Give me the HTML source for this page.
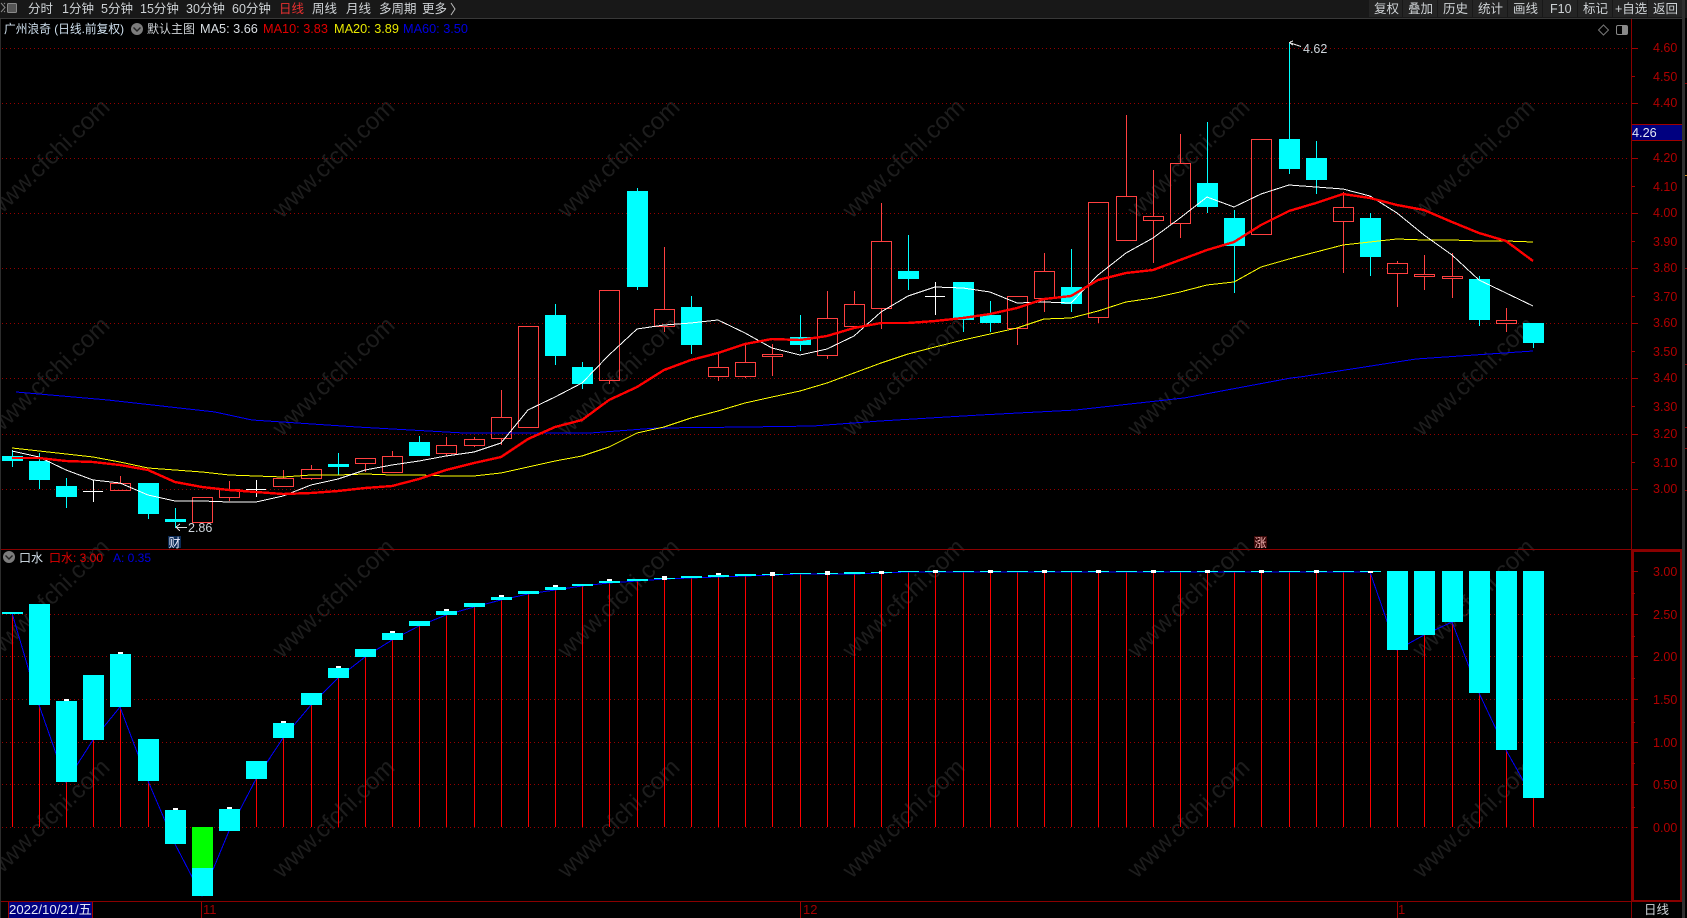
<!DOCTYPE html>
<html>
<head>
<meta charset="utf-8">
<title>广州浪奇</title>
<style>
html,body{margin:0;padding:0;background:#000;width:1687px;height:918px;overflow:hidden}
svg{display:block}
text{font-family:"Liberation Sans","Noto Sans CJK SC",sans-serif}
.t{fill:#cfd3d6;font-size:12.5px}
.a{fill:#b00000;font-size:12.5px}
.w{fill:#1d1d1d;font-size:24px;text-anchor:middle}
</style>
</head>
<body>
<svg width="1687" height="918" viewBox="0 0 1687 918" xmlns="http://www.w3.org/2000/svg">
<rect width="1687" height="918" fill="#000"/>

<!-- watermark -->
<g>
<text class="w" transform="translate(54,164) rotate(-44)">www.cfchi.com</text>
<text class="w" transform="translate(339,164) rotate(-44)">www.cfchi.com</text>
<text class="w" transform="translate(624,164) rotate(-44)">www.cfchi.com</text>
<text class="w" transform="translate(909,164) rotate(-44)">www.cfchi.com</text>
<text class="w" transform="translate(1194,164) rotate(-44)">www.cfchi.com</text>
<text class="w" transform="translate(1479,164) rotate(-44)">www.cfchi.com</text>
<text class="w" transform="translate(54,382) rotate(-44)">www.cfchi.com</text>
<text class="w" transform="translate(339,382) rotate(-44)">www.cfchi.com</text>
<text class="w" transform="translate(624,382) rotate(-44)">www.cfchi.com</text>
<text class="w" transform="translate(909,382) rotate(-44)">www.cfchi.com</text>
<text class="w" transform="translate(1194,382) rotate(-44)">www.cfchi.com</text>
<text class="w" transform="translate(1479,382) rotate(-44)">www.cfchi.com</text>
<text class="w" transform="translate(54,604) rotate(-44)">www.cfchi.com</text>
<text class="w" transform="translate(339,604) rotate(-44)">www.cfchi.com</text>
<text class="w" transform="translate(624,604) rotate(-44)">www.cfchi.com</text>
<text class="w" transform="translate(909,604) rotate(-44)">www.cfchi.com</text>
<text class="w" transform="translate(1194,604) rotate(-44)">www.cfchi.com</text>
<text class="w" transform="translate(1479,604) rotate(-44)">www.cfchi.com</text>
<text class="w" transform="translate(54,824) rotate(-44)">www.cfchi.com</text>
<text class="w" transform="translate(339,824) rotate(-44)">www.cfchi.com</text>
<text class="w" transform="translate(624,824) rotate(-44)">www.cfchi.com</text>
<text class="w" transform="translate(909,824) rotate(-44)">www.cfchi.com</text>
<text class="w" transform="translate(1194,824) rotate(-44)">www.cfchi.com</text>
<text class="w" transform="translate(1479,824) rotate(-44)">www.cfchi.com</text>
</g>

<!-- grid -->
<g stroke="#960000" stroke-width="1" stroke-dasharray="1 3" shape-rendering="crispEdges" fill="none">
<path d="M2 48.5H1630M2 103.5H1630M2 158.5H1630M2 213.5H1630M2 268.5H1630M2 323.5H1630M2 378.5H1630M2 434.5H1630M2 489.5H1630"/>
<path d="M2 614.5H1630M2 656.5H1630M2 699.5H1630M2 742.5H1630M2 784.5H1630M2 827.5H1630"/>
</g>

<!-- upper candles -->
<g shape-rendering="crispEdges">
<path fill="none" stroke="#00ffff" d="M12.5 450V467M39.5 453V489M66.5 478V508M148.5 483V519M175.5 508V528M338.5 453V475M419.5 436V456M555.5 304V365M582.5 362V389M637.5 188V290M691.5 296V354M800.5 315V351M908.5 235V290M963.5 282V332M990.5 301V332M1071.5 249V312M1207.5 122V213M1234.5 210V293M1289.5 42V174M1316.5 141V194M1370.5 213V276M1479.5 276V326M1533.5 323V348"/>
<path fill="#00ffff" d="M2 456h21v5h-21zM29 461h21v19h-21zM56 486h21v11h-21zM138 483h21v31h-21zM165 519h21v3h-21zM328 464h21v3h-21zM409 442h21v14h-21zM545 315h21v41h-21zM572 367h21v17h-21zM627 191h21v96h-21zM681 307h21v38h-21zM790 337h21v8h-21zM898 271h21v8h-21zM953 282h21v38h-21zM980 315h21v8h-21zM1061 287h21v17h-21zM1197 183h21v24h-21zM1224 218h21v28h-21zM1279 139h21v30h-21zM1306 158h21v22h-21zM1360 218h21v39h-21zM1469 279h21v41h-21zM1523 323h21v20h-21z"/>
<path fill="none" stroke="#ff4040" d="M110.5 483.5h20v7h-20zM120.5 476V483M192.5 497.5h20v25h-20zM219.5 489.5h20v8h-20zM229.5 481V489M229.5 498V501M273.5 478.5h20v8h-20zM283.5 470V478M301.5 469.5h20v9h-20zM311.5 465V469M311.5 479V480M355.5 458.5h20v5h-20zM365.5 464V472M382.5 456.5h20v16h-20zM392.5 451V456M436.5 445.5h20v8h-20zM446.5 437V445M446.5 454V456M464.5 439.5h20v6h-20zM474.5 437V439M474.5 446V447M491.5 417.5h20v21h-20zM501.5 390V417M501.5 439V445M518.5 326.5h20v101h-20zM599.5 290.5h20v90h-20zM609.5 381V384M654.5 309.5h20v17h-20zM664.5 247V309M664.5 327V332M708.5 367.5h20v9h-20zM718.5 353V367M718.5 377V381M735.5 362.5h20v14h-20zM745.5 345V362M745.5 377V378M762.5 354.5h20v2h-20zM772.5 344V354M772.5 357V376M817.5 318.5h20v37h-20zM827.5 291V318M827.5 356V359M844.5 304.5h20v22h-20zM854.5 291V304M871.5 241.5h20v67h-20zM881.5 203V241M881.5 309V329M1007.5 296.5h20v32h-20zM1017.5 329V345M1034.5 271.5h20v27h-20zM1044.5 253V271M1044.5 299V312M1088.5 202.5h20v115h-20zM1098.5 318V323M1116.5 196.5h20v44h-20zM1126.5 115V196M1143.5 216.5h20v4h-20zM1153.5 170V216M1153.5 221V263M1170.5 163.5h20v60h-20zM1180.5 134V163M1180.5 224V238M1251.5 139.5h20v95h-20zM1333.5 207.5h20v14h-20zM1343.5 192V207M1343.5 222V273M1387.5 263.5h20v10h-20zM1397.5 261V263M1397.5 274V307M1414.5 274.5h20v2h-20zM1424.5 255V274M1424.5 277V290M1442.5 276.5h20v2h-20zM1452.5 253V276M1452.5 279V298M1496.5 320.5h20v3h-20zM1506.5 308V320M1506.5 324V332"/>
<path fill="none" stroke="#fff" d="M83 491.5H103M93.5 480V502M246 489.5H266M256.5 480V497M925 296.5H945M935.5 282V315"/>
</g>

<!-- MA lines -->
<g fill="none" stroke-linejoin="round" shape-rendering="crispEdges">
<polyline stroke="#0000ff" stroke-width="1" points="16,392 108,400 215,412 252,420 357,427 464,433 550,433 590,433 657,428 747,427 813,426 880,421 980,415 1076,410 1184,398 1291,378 1300,377 1416,359 1533,351"/>
<polyline stroke="#ffff00" stroke-width="1" points="12,448 39,451 66,454 93,457 120,462 148,468 175,470 202,472 229,475 256,476 283,477 311,475 338,475 365,474 392,475 419,475 446,476 474,476 501,473 528,467 555,461 582,456 609,447 637,433 664,427 691,418 718,411 745,403 772,397 800,391 827,383 854,373 881,363 908,354 935,347 963,340 990,334 1017,328 1044,319 1071,318 1098,311 1126,302 1153,298 1180,292 1207,285 1234,282 1261,267 1289,259 1316,252 1343,245 1370,242 1397,239 1424,240 1452,240 1479,241 1506,241 1533,242"/>
<polyline stroke="#ffffff" stroke-width="1" points="12,451 39,457 66,470 93,480 120,483 148,495 175,501 202,501 229,502 256,502 283,496 311,485 338,479 365,470 392,465 419,461 446,456 474,452 501,443 528,410 555,397 582,383 609,355 637,329 664,325 691,323 718,320 745,333 772,348 800,355 827,349 854,336 881,312 908,296 935,287 963,288 990,292 1017,303 1044,302 1071,303 1098,275 1126,253 1153,238 1180,218 1207,197 1234,207 1261,194 1289,185 1316,187 1343,189 1370,196 1397,213 1424,235 1452,255 1479,280 1506,293 1533,306"/>
<polyline stroke="#ff0000" stroke-width="2.4" points="12,458 39,458 66,461 93,462 120,465 148,470 175,482 202,487 229,490 256,492 283,494 311,493 338,491 365,488 392,486 419,479 446,470 474,463 501,457 528,439 555,427 582,420 609,400 637,387 664,370 691,360 718,353 745,344 772,339 800,340 827,336 854,328 881,323 908,323 935,321 963,318 990,314 1017,308 1044,299 1071,296 1098,280 1126,273 1153,270 1180,260 1207,250 1234,242 1261,225 1289,211 1316,203 1343,194 1370,198 1397,205 1424,210 1452,222 1479,233 1506,241 1533,261"/>
</g>

<!-- price annotations -->
<g fill="none" stroke="#d8d8d8" shape-rendering="crispEdges">
<path d="M187 527.5H176M176 527l4 -3M176 527l4 4"/>
<path d="M1289 42.5l12 4M1290 42l3 -1M1290 43l3 2"/>
</g>
<text x="188" y="532" fill="#cfd6dc" font-size="12.5">2.86</text>
<text x="1303" y="53" fill="#cfd6dc" font-size="12.5">4.62</text>

<!-- lower pane stems -->
<path fill="none" stroke="#ff0000" shape-rendering="crispEdges" d="M12.5 614V827M39.5 700V827M66.5 780V827M93.5 735V827M120.5 700V827M148.5 775V827M256.5 775V827M283.5 735V827M311.5 700V827M338.5 675V827M365.5 655V827M392.5 638V827M419.5 625V827M446.5 614V827M474.5 606V827M501.5 599V827M528.5 593V827M555.5 589V827M582.5 585V827M609.5 582V827M637.5 580V827M664.5 578V827M691.5 577V827M718.5 576V827M745.5 575V827M772.5 574V827M800.5 573V827M827.5 573V827M854.5 573V827M881.5 572V827M908.5 572V827M935.5 572V827M963.5 572V827M990.5 572V827M1017.5 572V827M1044.5 572V827M1071.5 572V827M1098.5 572V827M1126.5 572V827M1153.5 572V827M1180.5 572V827M1207.5 572V827M1234.5 572V827M1261.5 572V827M1289.5 572V827M1316.5 572V827M1343.5 572V827M1370.5 572V827M1397.5 640V827M1424.5 630V827M1452.5 620V827M1479.5 690V827M1506.5 745V827M1533.5 790V827"/>
<!-- lower pane A line -->
<polyline fill="none" stroke="#0000ff" stroke-width="1" shape-rendering="crispEdges" points="12,613 39,705 66,782 93,740 120,707 148,781 175,844 202,896 229,831 256,779 283,738 311,705 338,678 365,657 392,640 419,626 446,615 474,607 501,600 528,594 555,590 582,586 609,583 637,581 664,579 691,578 718,577 745,576 772,575 800,574 827,574 854,574 881,573 908,572 1370,572 1397,650 1424,635 1452,622 1479,693 1506,750 1533,798"/>
<!-- lower pane bodies -->
<g shape-rendering="crispEdges">
<path fill="#00ff00" d="M192 827h21v41h-21z"/>
<path fill="#00ffff" d="M2 612h21v2h-21zM29 604h21v101h-21zM56 701h21v81h-21zM83 675h21v65h-21zM110 654h21v53h-21zM138 739h21v42h-21zM165 810h21v34h-21zM192 868h21v28h-21zM219 809h21v22h-21zM246 761h21v18h-21zM273 723h21v15h-21zM301 693h21v12h-21zM328 668h21v10h-21zM355 649h21v8h-21zM382 633h21v7h-21zM409 621h21v5h-21zM436 611h21v4h-21zM464 603h21v4h-21zM491 597h21v3h-21zM518 591h21v3h-21zM545 587h21v3h-21zM572 584h21v2h-21zM599 581h21v2h-21zM627 579h21v2h-21zM654 578h21v1h-21zM681 576h21v2h-21zM708 575h21v2h-21zM735 574h21v2h-21zM762 574h21v1h-21zM790 573h21v1h-21zM817 573h21v1h-21zM844 572h21v2h-21zM871 572h21v1h-21zM898 571h21v1h-21zM925 571h21v1h-21zM953 571h21v1h-21zM980 571h21v1h-21zM1007 571h21v1h-21zM1034 571h21v1h-21zM1061 571h21v1h-21zM1088 571h21v1h-21zM1116 571h21v1h-21zM1143 571h21v1h-21zM1170 571h21v1h-21zM1197 571h21v1h-21zM1224 571h21v1h-21zM1251 571h21v1h-21zM1279 571h21v1h-21zM1306 571h21v1h-21zM1333 571h21v1h-21zM1360 571h21v1h-21zM1387 571h21v79h-21zM1414 571h21v64h-21zM1442 571h21v51h-21zM1469 571h21v122h-21zM1496 571h21v179h-21zM1523 571h21v227h-21z"/>
<path fill="#fff" d="M64 699h5v2h-5zM118 652h5v2h-5zM173 808h5v2h-5zM227 807h5v2h-5zM281 721h5v2h-5zM336 666h5v2h-5zM390 631h5v2h-5zM444 609h5v2h-5zM499 595h5v2h-5zM553 585h5v2h-5zM607 579h5v2h-5zM662 576h5v4h-5zM716 573h5v2h-5zM770 572h5v4h-5zM825 571h5v4h-5zM879 571h5v3h-5zM933 570h5v3h-5zM988 570h5v3h-5zM1042 570h5v3h-5zM1096 570h5v3h-5zM1151 570h5v3h-5zM1205 570h5v3h-5zM1259 570h5v3h-5zM1314 570h5v3h-5zM1368 571h5v2h-5z"/>
</g>

<!-- frames / axes -->
<g shape-rendering="crispEdges">
<rect x="0" y="0" width="1687" height="18" fill="#181818"/>
<rect x="0" y="18" width="1685" height="1" fill="#383838"/>
<rect x="0" y="19" width="1" height="899" fill="#2c2c2c"/>
<rect x="1682" y="0" width="3" height="918" fill="#303030"/>
<rect x="1" y="549" width="1681" height="1" fill="#8a0000"/>
<rect x="1" y="901" width="1681" height="1" fill="#8a0000"/>
<rect x="1631" y="19" width="1" height="899" fill="#8a0000"/>
<rect x="1632" y="550" width="50" height="2" fill="#8a0000"/>
<rect x="1632" y="550" width="2" height="352" fill="#8a0000"/>
<rect x="1680" y="550" width="2" height="352" fill="#8a0000"/>
<rect x="1632" y="900" width="50" height="2" fill="#8a0000"/>
<path fill="none" stroke="#a00000" d="M1632 48.5h6M1632 76.5h3M1632 103.5h6M1632 131.5h3M1632 158.5h6M1632 186.5h3M1632 213.5h6M1632 241.5h3M1632 268.5h6M1632 296.5h3M1632 323.5h6M1632 351.5h3M1632 378.5h6M1632 406.5h3M1632 434.5h6M1632 462.5h3M1632 489.5h6"/>
<path fill="none" stroke="#a00000" d="M1632 571.5h6M1632 593.5h3M1632 614.5h6M1632 636.5h3M1632 656.5h6M1632 678.5h3M1632 699.5h6M1632 722.5h3M1632 742.5h6M1632 763.5h3M1632 784.5h6M1632 807.5h3M1632 827.5h6"/>
<path fill="none" stroke="#8a0000" d="M1685 83.5h2M1685 268.5h2M1685 364.5h2M1685 427.5h2M1685 448.5h2M1685 490.5h2"/>
<path fill="none" stroke="#d09020" d="M1685 175.5h2"/>
<rect x="1632" y="124" width="50" height="16" fill="#000080"/>
<rect x="1632" y="124" width="50" height="1" fill="#a00000"/>
<rect x="1632" y="140" width="50" height="1" fill="#a00000"/>
<!-- right toolbar buttons -->
<g fill="#242424">
<rect x="1369" y="0" width="33" height="17"/>
<rect x="1403" y="0" width="34" height="17"/>
<rect x="1438" y="0" width="34" height="17"/>
<rect x="1473" y="0" width="34" height="17"/>
<rect x="1508" y="0" width="34" height="17"/>
<rect x="1543" y="0" width="34" height="17"/>
<rect x="1578" y="0" width="34" height="17"/>
<rect x="1613" y="0" width="34" height="17"/>
<rect x="1648" y="0" width="34" height="17"/>
</g>
<!-- date area -->
<rect x="8" y="902" width="85" height="16" fill="#000080"/>
<path fill="none" stroke="#a00000" d="M8.5 902V918M92.5 902V918M201.5 902V918M800.5 902V918M1397.5 902V918"/>
</g>

<!-- top-left icon -->
<g fill="none" stroke="#8a8a8a">
<rect x="7.5" y="3.5" width="9" height="9" fill="#555" rx="1"/>
<path d="M1 3l4 4.5-4 4.5M5 3l-1 1M5 12l-1-1"/>
</g>

<!-- toolbar text -->
<g class="tb">
<text class="t" x="28" y="13">分时</text>
<text class="t" x="62" y="13">1分钟</text>
<text class="t" x="101" y="13">5分钟</text>
<text class="t" x="140" y="13">15分钟</text>
<text class="t" x="186" y="13">30分钟</text>
<text class="t" x="232" y="13">60分钟</text>
<text class="t" x="279" y="13" style="fill:#e83030">日线</text>
<text class="t" x="312" y="13">周线</text>
<text class="t" x="346" y="13">月线</text>
<text class="t" x="379" y="13">多周期</text>
<text class="t" x="422" y="13">更多</text>
<path d="M451 3l4 6-4 6" fill="none" stroke="#bbb"/>
<text class="t" x="1374" y="13">复权</text>
<text class="t" x="1408" y="13">叠加</text>
<text class="t" x="1443" y="13">历史</text>
<text class="t" x="1478" y="13">统计</text>
<text class="t" x="1513" y="13">画线</text>
<text class="t" x="1550" y="13">F10</text>
<text class="t" x="1583" y="13">标记</text>
<text class="t" x="1615" y="13">+自选</text>
<text class="t" x="1653" y="13">返回</text>
</g>

<!-- info line -->
<text x="4" y="33" fill="#cfe0ee" font-size="12" textLength="120" lengthAdjust="spacingAndGlyphs">广州浪奇 (日线.前复权)</text>
<circle cx="137" cy="29" r="6" fill="#7c7c7c"/>
<path d="M133.5 27.5l3.5 3.5 3.5-3.5" fill="none" stroke="#222" stroke-width="1.4"/>
<text x="147" y="33" fill="#d0d4d8" font-size="12">默认主图</text>
<text x="200" y="33" fill="#d8dde2" font-size="12.7">MA5: 3.66</text>
<text x="263" y="33" fill="#e00000" font-size="12.7">MA10: 3.83</text>
<text x="334" y="33" fill="#e8e800" font-size="12.7">MA20: 3.89</text>
<text x="403" y="33" fill="#0000e0" font-size="12.7">MA60: 3.50</text>

<!-- top right icons -->
<path d="M1603.5 25l5 5-5 5-5-5z" fill="none" stroke="#777"/>
<rect x="1616.5" y="25.5" width="11" height="9" rx="1.5" fill="none" stroke="#888"/>
<rect x="1622" y="26" width="5" height="8" fill="#888"/>

<!-- upper axis labels -->
<g class="ax">
<text class="a" x="1653" y="52">4.60</text>
<text class="a" x="1653" y="81">4.50</text>
<text class="a" x="1653" y="107">4.40</text>
<text x="1632" y="137" fill="#e4e8f4" font-size="12.7">4.26</text>
<text class="a" x="1653" y="162">4.20</text>
<text class="a" x="1653" y="191">4.10</text>
<text class="a" x="1653" y="217">4.00</text>
<text class="a" x="1653" y="246">3.90</text>
<text class="a" x="1653" y="272">3.80</text>
<text class="a" x="1653" y="301">3.70</text>
<text class="a" x="1653" y="327">3.60</text>
<text class="a" x="1653" y="356">3.50</text>
<text class="a" x="1653" y="382">3.40</text>
<text class="a" x="1653" y="411">3.30</text>
<text class="a" x="1653" y="438">3.20</text>
<text class="a" x="1653" y="467">3.10</text>
<text class="a" x="1653" y="493">3.00</text>
<text class="a" x="1653" y="576">3.00</text>
<text class="a" x="1653" y="619">2.50</text>
<text class="a" x="1653" y="661">2.00</text>
<text class="a" x="1653" y="704">1.50</text>
<text class="a" x="1653" y="747">1.00</text>
<text class="a" x="1653" y="789">0.50</text>
<text class="a" x="1653" y="832">0.00</text>
</g>

<!-- tags -->
<rect x="168" y="536" width="13" height="12" fill="#0a2a55"/>
<text x="168.5" y="547" fill="#eef" font-size="12">财</text>
<rect x="1254" y="536" width="13" height="12" fill="#3a0808"/>
<text x="1254.5" y="547" fill="#f0b0b0" font-size="12">涨</text>

<!-- lower legend -->
<circle cx="9" cy="557" r="6" fill="#7c7c7c"/>
<path d="M5.5 555.5l3.5 3.5 3.5-3.5" fill="none" stroke="#222" stroke-width="1.4"/>
<text x="19" y="562" fill="#d8e4ee" font-size="12">口水</text>
<text x="49" y="562" fill="#e00000" font-size="12">口水: 3.00</text>
<text x="113" y="562" fill="#0000e0" font-size="12">A: 0.35</text>

<!-- bottom -->
<text x="9" y="914" fill="#e4e8f4" font-size="13.2">2022/10/21/五</text>
<text x="203" y="914" fill="#a00000" font-size="13">11</text>
<text x="803" y="914" fill="#a00000" font-size="13">12</text>
<text x="1398" y="914" fill="#a00000" font-size="13">1</text>
<text x="1644" y="914" fill="#d0d4d8" font-size="12.5">日线</text>
</svg>
</body>
</html>
